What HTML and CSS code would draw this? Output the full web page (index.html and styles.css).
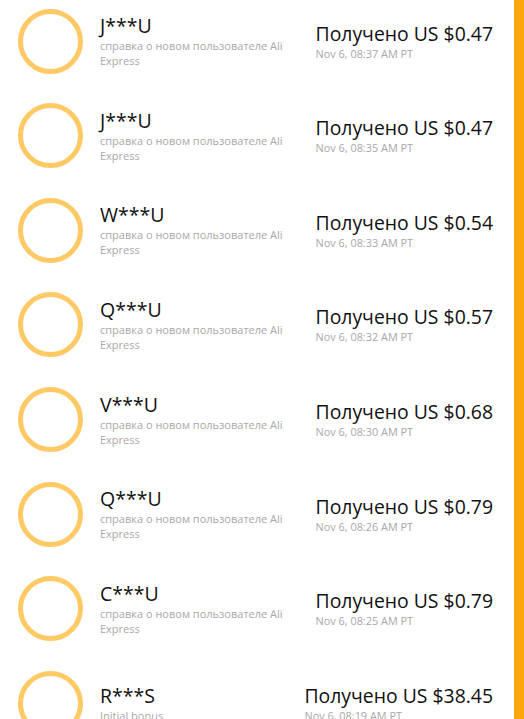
FILE: index.html
```html
<!DOCTYPE html>
<html lang="ru">
<head>
    <meta charset="UTF-8">
    <meta name="viewport" content="width=device-width, initial-scale=1.0">
    <title>Бонусы</title>
    <link rel="stylesheet" href="styles.css">
</head>
<body>
    <div class="page">
        <ul class="list">
            <li class="row">
                <div class="avatar"></div>
                <div class="info">
                    <div class="name">J***U</div>
                    <div class="note">справка о новом пользователе Ali Express</div>
                </div>
                <div class="amount">
                    <div class="sum">Получено US $0.47</div>
                    <div class="date">Nov 6, 08:37 AM PT</div>
                </div>
            </li>
            <li class="row">
                <div class="avatar"></div>
                <div class="info">
                    <div class="name">J***U</div>
                    <div class="note">справка о новом пользователе Ali Express</div>
                </div>
                <div class="amount">
                    <div class="sum">Получено US $0.47</div>
                    <div class="date">Nov 6, 08:35 AM PT</div>
                </div>
            </li>
            <li class="row">
                <div class="avatar"></div>
                <div class="info">
                    <div class="name">W***U</div>
                    <div class="note">справка о новом пользователе Ali Express</div>
                </div>
                <div class="amount">
                    <div class="sum">Получено US $0.54</div>
                    <div class="date">Nov 6, 08:33 AM PT</div>
                </div>
            </li>
            <li class="row">
                <div class="avatar"></div>
                <div class="info">
                    <div class="name">Q***U</div>
                    <div class="note">справка о новом пользователе Ali Express</div>
                </div>
                <div class="amount">
                    <div class="sum">Получено US $0.57</div>
                    <div class="date">Nov 6, 08:32 AM PT</div>
                </div>
            </li>
            <li class="row">
                <div class="avatar"></div>
                <div class="info">
                    <div class="name">V***U</div>
                    <div class="note">справка о новом пользователе Ali Express</div>
                </div>
                <div class="amount">
                    <div class="sum">Получено US $0.68</div>
                    <div class="date">Nov 6, 08:30 AM PT</div>
                </div>
            </li>
            <li class="row">
                <div class="avatar"></div>
                <div class="info">
                    <div class="name">Q***U</div>
                    <div class="note">справка о новом пользователе Ali Express</div>
                </div>
                <div class="amount">
                    <div class="sum">Получено US $0.79</div>
                    <div class="date">Nov 6, 08:26 AM PT</div>
                </div>
            </li>
            <li class="row">
                <div class="avatar"></div>
                <div class="info">
                    <div class="name">C***U</div>
                    <div class="note">справка о новом пользователе Ali Express</div>
                </div>
                <div class="amount">
                    <div class="sum">Получено US $0.79</div>
                    <div class="date">Nov 6, 08:25 AM PT</div>
                </div>
            </li>
            <li class="row">
                <div class="avatar"></div>
                <div class="info">
                    <div class="name">R***S</div>
                    <div class="note">Initial bonus</div>
                </div>
                <div class="amount">
                    <div class="sum">Получено US $38.45</div>
                    <div class="date">Nov 6, 08:19 AM PT</div>
                </div>
            </li>
        </ul>
        <div class="bar"></div>
    </div>
</body>
</html>
```

FILE: styles.css
```css
html, body {
    margin: 0;
    padding: 0;
    height: 100%;
    overflow: hidden;
}
body {
    font-family: "Open Sans", Arial, sans-serif;
    background-color: #fff;
    color: #111;
}
.page {
    display: flex;
    height: 100%;
}
.list {
    flex: 1;
    list-style: none;
    margin: -6px 0 0;
    padding: 0 21px 0 18px;
}
.row {
    display: flex;
    align-items: center;
    height: 94.57px;
}
.avatar {
    width: 55px;
    height: 55px;
    border: 5px solid #ffc966;
    border-radius: 50%;
    flex-shrink: 0;
}
.info {
    width: 190px;
    margin-left: 17px;
}
.name {
    font-size: 19.5px;
    line-height: 24px;
}
.note {
    font-size: 11px;
    line-height: 15px;
    color: #a8a8a8;
}
.amount {
    margin-left: auto;
}
.sum {
    font-size: 19.4px;
    line-height: 24px;
}
.date {
    font-size: 10.9px;
    line-height: 15px;
    color: #a8a8a8;
}
.bar {
    width: 10px;
    background-color: #ffa50d;
}
```
